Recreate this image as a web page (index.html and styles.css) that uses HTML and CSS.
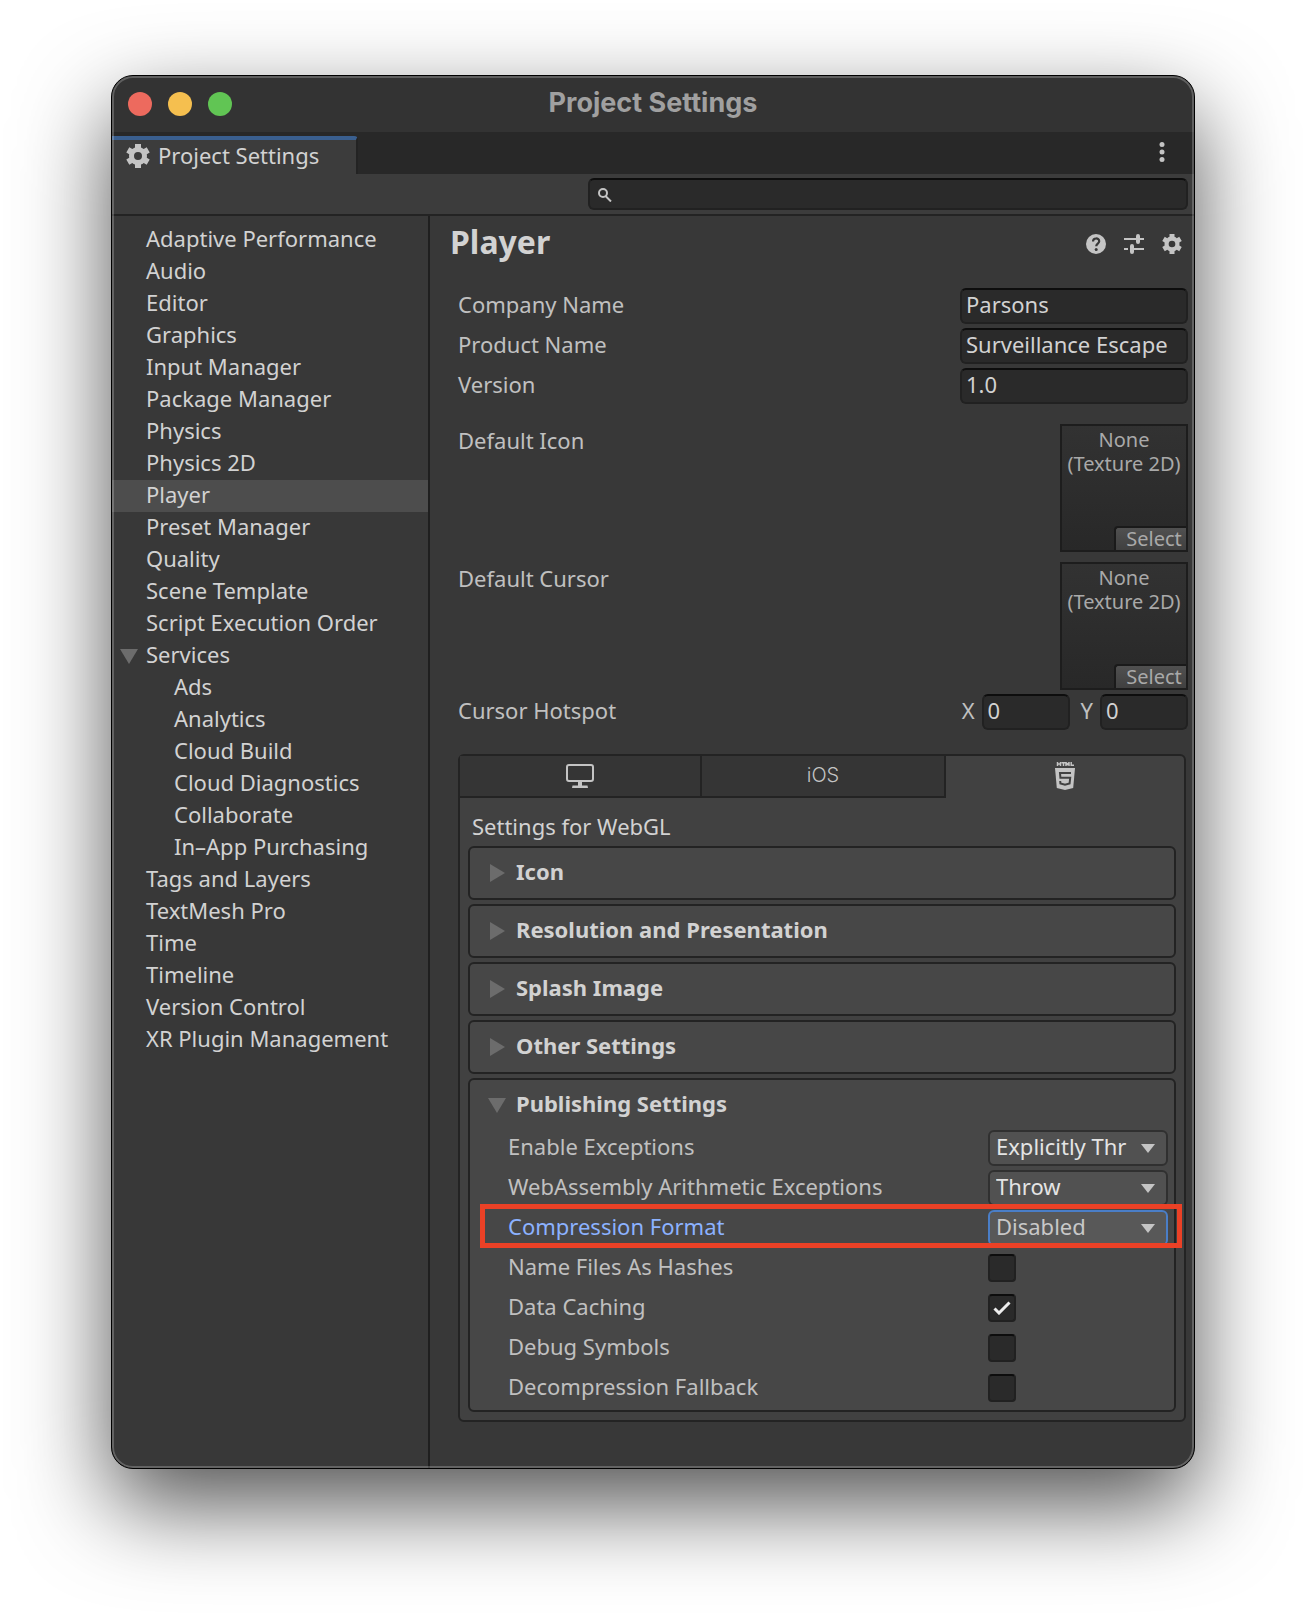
FILE: index.html
```html
<!DOCTYPE html>
<html lang="en">
<head>
<meta charset="utf-8">
<title>Project Settings</title>
<link rel="stylesheet" href="styles.css">
</head>
<body>
<svg class="sprite" aria-hidden="true">
  <symbol id="gear" viewBox="0 0 24 24">
    <path fill="currentColor" fill-rule="evenodd" d="M9 0h6v3.4a9 9 0 0 1 2.7 1.6l3-1.7 3 5.200-2.900 1.700a9 9 0 0 1 0 3.600l2.900 1.700-3 5.200-3-1.700a9 9 0 0 1-2.700 1.600V24H9v-3.400a9 9 0 0 1-2.700-1.600l-3 1.700-3-5.200 2.900-1.700a9 9 0 0 1 0-3.600L.3 8.500l3-5.200 3 1.700A9 9 0 0 1 9 3.400zM12 8a4 4 0 1 0 0 8 4 4 0 0 0 0-8z"/>
  </symbol>
</svg>
<main class="window">
  <header class="titlebar">
    <div class="lights">
      <button class="light red" aria-label="Close"></button>
      <button class="light yellow" aria-label="Minimize"></button>
      <button class="light green" aria-label="Zoom"></button>
    </div>
    <h1 class="title">Project Settings</h1>
  </header>
  <div class="tabbar">
    <button class="dock-tab"><svg class="tab-gear"><use href="#gear"/></svg><span>Project Settings</span></button>
    <button class="more" aria-label="More options"><svg width="6" height="20" viewBox="0 0 6 20"><g fill="currentColor"><circle cx="3" cy="2.500" r="2.500"/><circle cx="3" cy="10" r="2.500"/><circle cx="3" cy="17.500" r="2.500"/></g></svg></button>
  </div>
  <div class="toolbar">
    <label class="search">
      <svg width="14" height="14" viewBox="0 0 14 14"><g fill="none" stroke="currentColor" stroke-width="2"><circle cx="5" cy="5" r="4"/><path d="M7.500 8l5.500 5.500"/></g></svg>
      <input type="text" aria-label="Search settings">
    </label>
  </div>
  <div class="split">
    <nav class="sidebar">
      <a href="#">Adaptive Performance</a>
      <a href="#">Audio</a>
      <a href="#">Editor</a>
      <a href="#">Graphics</a>
      <a href="#">Input Manager</a>
      <a href="#">Package Manager</a>
      <a href="#">Physics</a>
      <a href="#">Physics 2D</a>
      <a href="#" class="current">Player</a>
      <a href="#">Preset Manager</a>
      <a href="#">Quality</a>
      <a href="#">Scene Template</a>
      <a href="#">Script Execution Order</a>
      <a href="#" class="group"><svg class="arrow" viewBox="0 0 18 18"><path fill="currentColor" d="M0 2h18L9 17z"/></svg>Services</a>
      <a href="#" class="nested">Ads</a>
      <a href="#" class="nested">Analytics</a>
      <a href="#" class="nested">Cloud Build</a>
      <a href="#" class="nested">Cloud Diagnostics</a>
      <a href="#" class="nested">Collaborate</a>
      <a href="#" class="nested">In–App Purchasing</a>
      <a href="#">Tags and Layers</a>
      <a href="#">TextMesh Pro</a>
      <a href="#">Time</a>
      <a href="#">Timeline</a>
      <a href="#">Version Control</a>
      <a href="#">XR Plugin Management</a>
    </nav>
    <section class="content">
      <div class="heading">
        <h2>Player</h2>
        <div class="tools">
          <button aria-label="Help"><svg viewBox="0 0 20 20"><circle cx="10" cy="10" r="10" fill="currentColor"/><path d="M7 7.600C7 3.400 13.200 3.600 13.200 7.200c0 2.300-3 2.500-3 5" fill="none" stroke="#383838" stroke-width="2.200"/><circle cx="10.200" cy="15.500" r="1.500" fill="#383838"/></svg></button>
          <button aria-label="Presets"><svg viewBox="0 0 20 20"><g fill="none" stroke="currentColor" stroke-width="2"><path d="M0 5h20M8 15h12M0 15h4"/><path stroke-width="4" stroke-linecap="round" d="M14 2v6M8 12v6"/></g></svg></button>
          <button aria-label="Settings"><svg><use href="#gear"/></svg></button>
        </div>
      </div>
      <form class="form">
        <div class="field"><label for="company">Company Name</label><input class="text" id="company" type="text" value="Parsons"></div>
        <div class="field"><label for="product">Product Name</label><input class="text" id="product" type="text" value="Surveillance Escape"></div>
        <div class="field"><label for="version">Version</label><input class="text" id="version" type="text" value="1.0"></div>
        <div class="asset"><span>Default Icon</span><div class="texture"><span>None<br>(Texture 2D)</span><button type="button">Select</button></div></div>
        <div class="asset"><span>Default Cursor</span><div class="texture"><span>None<br>(Texture 2D)</span><button type="button">Select</button></div></div>
        <div class="field hotspot"><span>Cursor Hotspot</span>
          <div class="vector">
            <label for="hx">X</label><input class="text" id="hx" type="text" value="0">
            <label for="hy">Y</label><input class="text" id="hy" type="text" value="0">
          </div>
        </div>
      </form>
      <div class="platforms">
        <div class="platform-tabs">
          <button aria-label="Standalone"><svg width="28" height="24" viewBox="0 0 28 24"><rect x="1" y="1" width="26" height="16" rx="2" fill="none" stroke="currentColor" stroke-width="2"/><path fill="currentColor" d="M12 18h4v3.500h5.500L22 24H6l.5-2.500H12z"/></svg></button>
          <button class="ios">iOS</button>
          <button class="active" aria-label="WebGL"><svg width="20" height="28" viewBox="0 0 20 28"><path fill="none" stroke="currentColor" stroke-width="1.500" d="M2.500 0v4M2.500 2h2.500M5.500 0v4M6.500 .7h4M8.500 .7V4M11 4V.5l1.500 2L14 .5V4M16.200 0v3.300H19"/><path fill="currentColor" d="M0 6h20l-1.800 20L10 28l-8.200-2z"/><path fill="none" stroke="#414141" stroke-width="2" d="M16 11H5l.4 4.800h9.800l-.6 5.700-4.600 1.300-4.600-1.300-.2-2.500"/></svg></button>
        </div>
        <p class="platform-title">Settings for WebGL</p>
        <div class="foldouts">
          <section class="foldout"><button><svg class="arrow" viewBox="0 0 18 18"><path fill="currentColor" d="M2 0v18l15-9z"/></svg>Icon</button></section>
          <section class="foldout"><button><svg class="arrow" viewBox="0 0 18 18"><path fill="currentColor" d="M2 0v18l15-9z"/></svg>Resolution and Presentation</button></section>
          <section class="foldout"><button><svg class="arrow" viewBox="0 0 18 18"><path fill="currentColor" d="M2 0v18l15-9z"/></svg>Splash Image</button></section>
          <section class="foldout"><button><svg class="arrow" viewBox="0 0 18 18"><path fill="currentColor" d="M2 0v18l15-9z"/></svg>Other Settings</button></section>
          <section class="foldout">
            <button><svg class="arrow" viewBox="0 0 18 18"><path fill="currentColor" d="M0 2h18L9 17z"/></svg>Publishing Settings</button>
            <div class="option"><label for="exc">Enable Exceptions</label><div class="value"><select id="exc"><option>Explicitly Thr</option></select></div></div>
            <div class="option"><label for="arith">WebAssembly Arithmetic Exceptions</label><div class="value"><select id="arith"><option>Throw</option></select></div></div>
            <div class="option marked"><label for="comp">Compression Format</label><div class="value"><select id="comp"><option>Disabled</option></select></div></div>
            <div class="option"><label for="hash">Name Files As Hashes</label><div class="value"><input type="checkbox" id="hash"></div></div>
            <div class="option"><label for="cache">Data Caching</label><div class="value"><input type="checkbox" id="cache" checked></div></div>
            <div class="option"><label for="debug">Debug Symbols</label><div class="value"><input type="checkbox" id="debug"></div></div>
            <div class="option"><label for="fallback">Decompression Fallback</label><div class="value"><input type="checkbox" id="fallback"></div></div>
          </section>
        </div>
      </div>
    </section>
  </div>
</main>
</body>
</html>
```

FILE: styles.css
```css
* { box-sizing: border-box; }

body {
  margin: 0;
  padding: 75px 111px 148px;
  background: #fff;
  color: #d2d2d2;
  font: 22px/28px "Noto Sans", "Open Sans", sans-serif;
}

button, input, select { font: inherit; color: inherit; margin: 0; }
button { padding: 0; border: 0; background: none; }
svg { display: block; flex: none; }
.sprite { position: absolute; width: 0; height: 0; }

.window {
  position: relative;
  border: 1px solid #000;
  border-radius: 22px;
  overflow: hidden;
  background: #383838;
  box-shadow: 0 36px 90px rgba(0, 0, 0, .68);
}
/* light rim drawn over the window's edge */
.window::after {
  content: "";
  position: absolute;
  inset: 0;
  border: 2px solid rgba(255, 255, 255, .22);
  border-radius: 21px;
  pointer-events: none;
}

.titlebar {
  display: grid;
  grid-template-columns: 1fr auto 1fr;
  align-items: center;
  height: 56px;
  padding: 0 16px;
  background: #333;
}
.lights { display: flex; gap: 16px; }
.light { width: 24px; height: 24px; border-radius: 50%; }
.red { background: #ed6a5e; }
.yellow { background: #f5bf4f; }
.green { background: #61c554; }
.title { margin: 0; padding-bottom: 2px; color: #a0a0a0; font: 700 27px/32px Inter, sans-serif; }

.tabbar {
  display: flex;
  justify-content: space-between;
  height: 42px;
  padding: 4px 29px 0 0;
  background: #282828;
}
.dock-tab {
  display: flex;
  align-items: center;
  gap: 8px;
  width: 246px;
  padding: 0 0 2px 14px;
  border-top: 4px solid #3a5f8f;
  border-right: 2px solid #232323;
  border-radius: 0 4px 0 0;
  background: #3c3c3c;
}
.dock-tab span { padding-bottom: 2px; }
.tab-gear { width: 24px; height: 24px; color: #c4c4c4; }
.more { align-self: center; padding-bottom: 6px; color: #c4c4c4; }

.toolbar {
  display: flex;
  justify-content: flex-end;
  padding: 4px 6px;
  border-bottom: 2px solid #232323;
  background: #3c3c3c;
}
.search, .text {
  border: 2px solid #212121;
  border-top-color: #0d0d0d;
  border-radius: 6px;
  background: #2a2a2a;
}
.search {
  display: flex;
  align-items: center;
  gap: 8px;
  width: 600px;
  height: 32px;
  padding: 2px 8px 0;
  color: #c4c4c4;
}
.search input { flex: 1; min-width: 0; height: 24px; padding: 0; border: 0; outline: 0; background: none; }

.split { display: flex; }
.sidebar { flex: none; width: 318px; padding: 8px 0; border-right: 2px solid #1f1f1f; }
.sidebar a { display: block; padding: 0 0 4px 34px; color: inherit; text-decoration: none; }
.sidebar .current { background: #4d4d4d; }
.sidebar .nested { padding-left: 62px; }
.sidebar .group { display: flex; align-items: center; gap: 8px; padding-left: 8px; }
.arrow { width: 18px; height: 18px; margin-top: 4px; color: #6c6c6c; }

.content { flex: 1; min-width: 0; padding: 8px 6px 46px 20px; }
.heading { display: flex; align-items: center; justify-content: space-between; height: 40px; }
.heading h2 { margin: 0; padding-bottom: 4px; font-size: 32px; line-height: 36px; }
.tools { display: flex; gap: 18px; padding-right: 6px; color: #c4c4c4; }
.tools svg { width: 20px; height: 20px; }

.form { padding: 22px 0 0 8px; color: #c0c0c0; }
.field { display: flex; align-items: center; justify-content: space-between; height: 40px; }
.field label, .field span, .option label { padding-bottom: 4px; }
.text { width: 228px; height: 36px; padding: 0 4px 4px; color: #d2d2d2; }
.asset { display: flex; justify-content: space-between; margin-bottom: 10px; }
.asset > span { padding-top: 2px; }
.field + .asset { margin-top: 18px; }
.texture {
  display: flex;
  flex-direction: column;
  justify-content: space-between;
  width: 128px;
  height: 128px;
  padding-top: 2px;
  border: 2px solid #1d1d1d;
  background: linear-gradient(#323232, #282828);
  color: #a9a9a9;
  font-size: 20px;
  line-height: 24px;
  text-align: center;
}
.texture button {
  align-self: flex-end;
  width: 72px;
  height: 24px;
  padding-left: 6px;
  border: solid #1a1a1a;
  border-width: 2px 0 0 2px;
  border-radius: 4px 0 0 0;
  background: linear-gradient(#505050, #404040);
  line-height: 22px;
}
.hotspot { margin-top: -8px; }
.vector { display: flex; align-items: center; gap: 7px; }
.vector .text { width: 88px; }
.vector input + label { margin-left: 4px; }

.platforms { margin: 22px 2px 0 8px; border: 2px solid #232323; border-radius: 6px; background: #414141; }
.platform-tabs { display: grid; grid-template-columns: 242px 244px 1fr; }
.platform-tabs button {
  display: flex;
  align-items: center;
  justify-content: center;
  height: 42px;
  border-right: 2px solid #232323;
  border-bottom: 2px solid #232323;
  background: #353535;
  color: #c4c4c4;
}
.platform-tabs .active { border-right: 0; border-color: transparent; background: none; }
.platform-tabs .ios { padding-bottom: 2px; font: 300 20px/24px Inter, sans-serif; }
.platform-title { margin: 0; padding: 14px 12px 6px; }
.foldouts { display: grid; gap: 4px; padding: 0 8px 8px; }
.foldout { padding-bottom: 2px; border: 2px solid #232323; border-radius: 6px; background: #474747; }
.foldout > button {
  display: flex;
  align-items: center;
  gap: 10px;
  width: 100%;
  height: 48px;
  padding: 0 0 2px 18px;
  font-weight: 700;
}
.option {
  position: relative;
  display: flex;
  align-items: center;
  justify-content: space-between;
  height: 40px;
  padding: 0 6px 0 38px;
  color: #c0c0c0;
}
.value { display: flex; width: 180px; }
select {
  width: 180px;
  height: 36px;
  padding: 0 24px 4px 6px;
  border: 2px solid #303030;
  border-radius: 6px;
  appearance: none;
  background: #515151 url("data:image/svg+xml,%3Csvg xmlns='http://www.w3.org/2000/svg' width='14' height='9'%3E%3Cpath d='M0 0h14L7 9z' fill='%23c4c4c4'/%3E%3C/svg%3E") no-repeat right 11px top 12px;
  color: #e4e4e4;
}
input[type="checkbox"] {
  width: 28px;
  height: 28px;
  border: 2px solid #212121;
  border-top-color: #0d0d0d;
  border-radius: 4px;
  appearance: none;
  background: #2a2a2a;
}
input[type="checkbox"]:checked {
  background: #2a2a2a url("data:image/svg+xml,%3Csvg xmlns='http://www.w3.org/2000/svg' width='18' height='14'%3E%3Cpath d='M1.500 7.500l4.500 4.500L16.500 1.500' fill='none' stroke='%23eee' stroke-width='3'/%3E%3C/svg%3E") no-repeat center;
}
.marked label { color: #8cb2ff; }
.marked select { border-color: #4a7ec7; background-color: #585858; color: #c8c8c8; }
/* callout frame around the highlighted option */
.marked::after {
  content: "";
  position: absolute;
  inset: -4px -8px 0 10px;
  border: 5px solid #eb4126;
  pointer-events: none;
}
```
